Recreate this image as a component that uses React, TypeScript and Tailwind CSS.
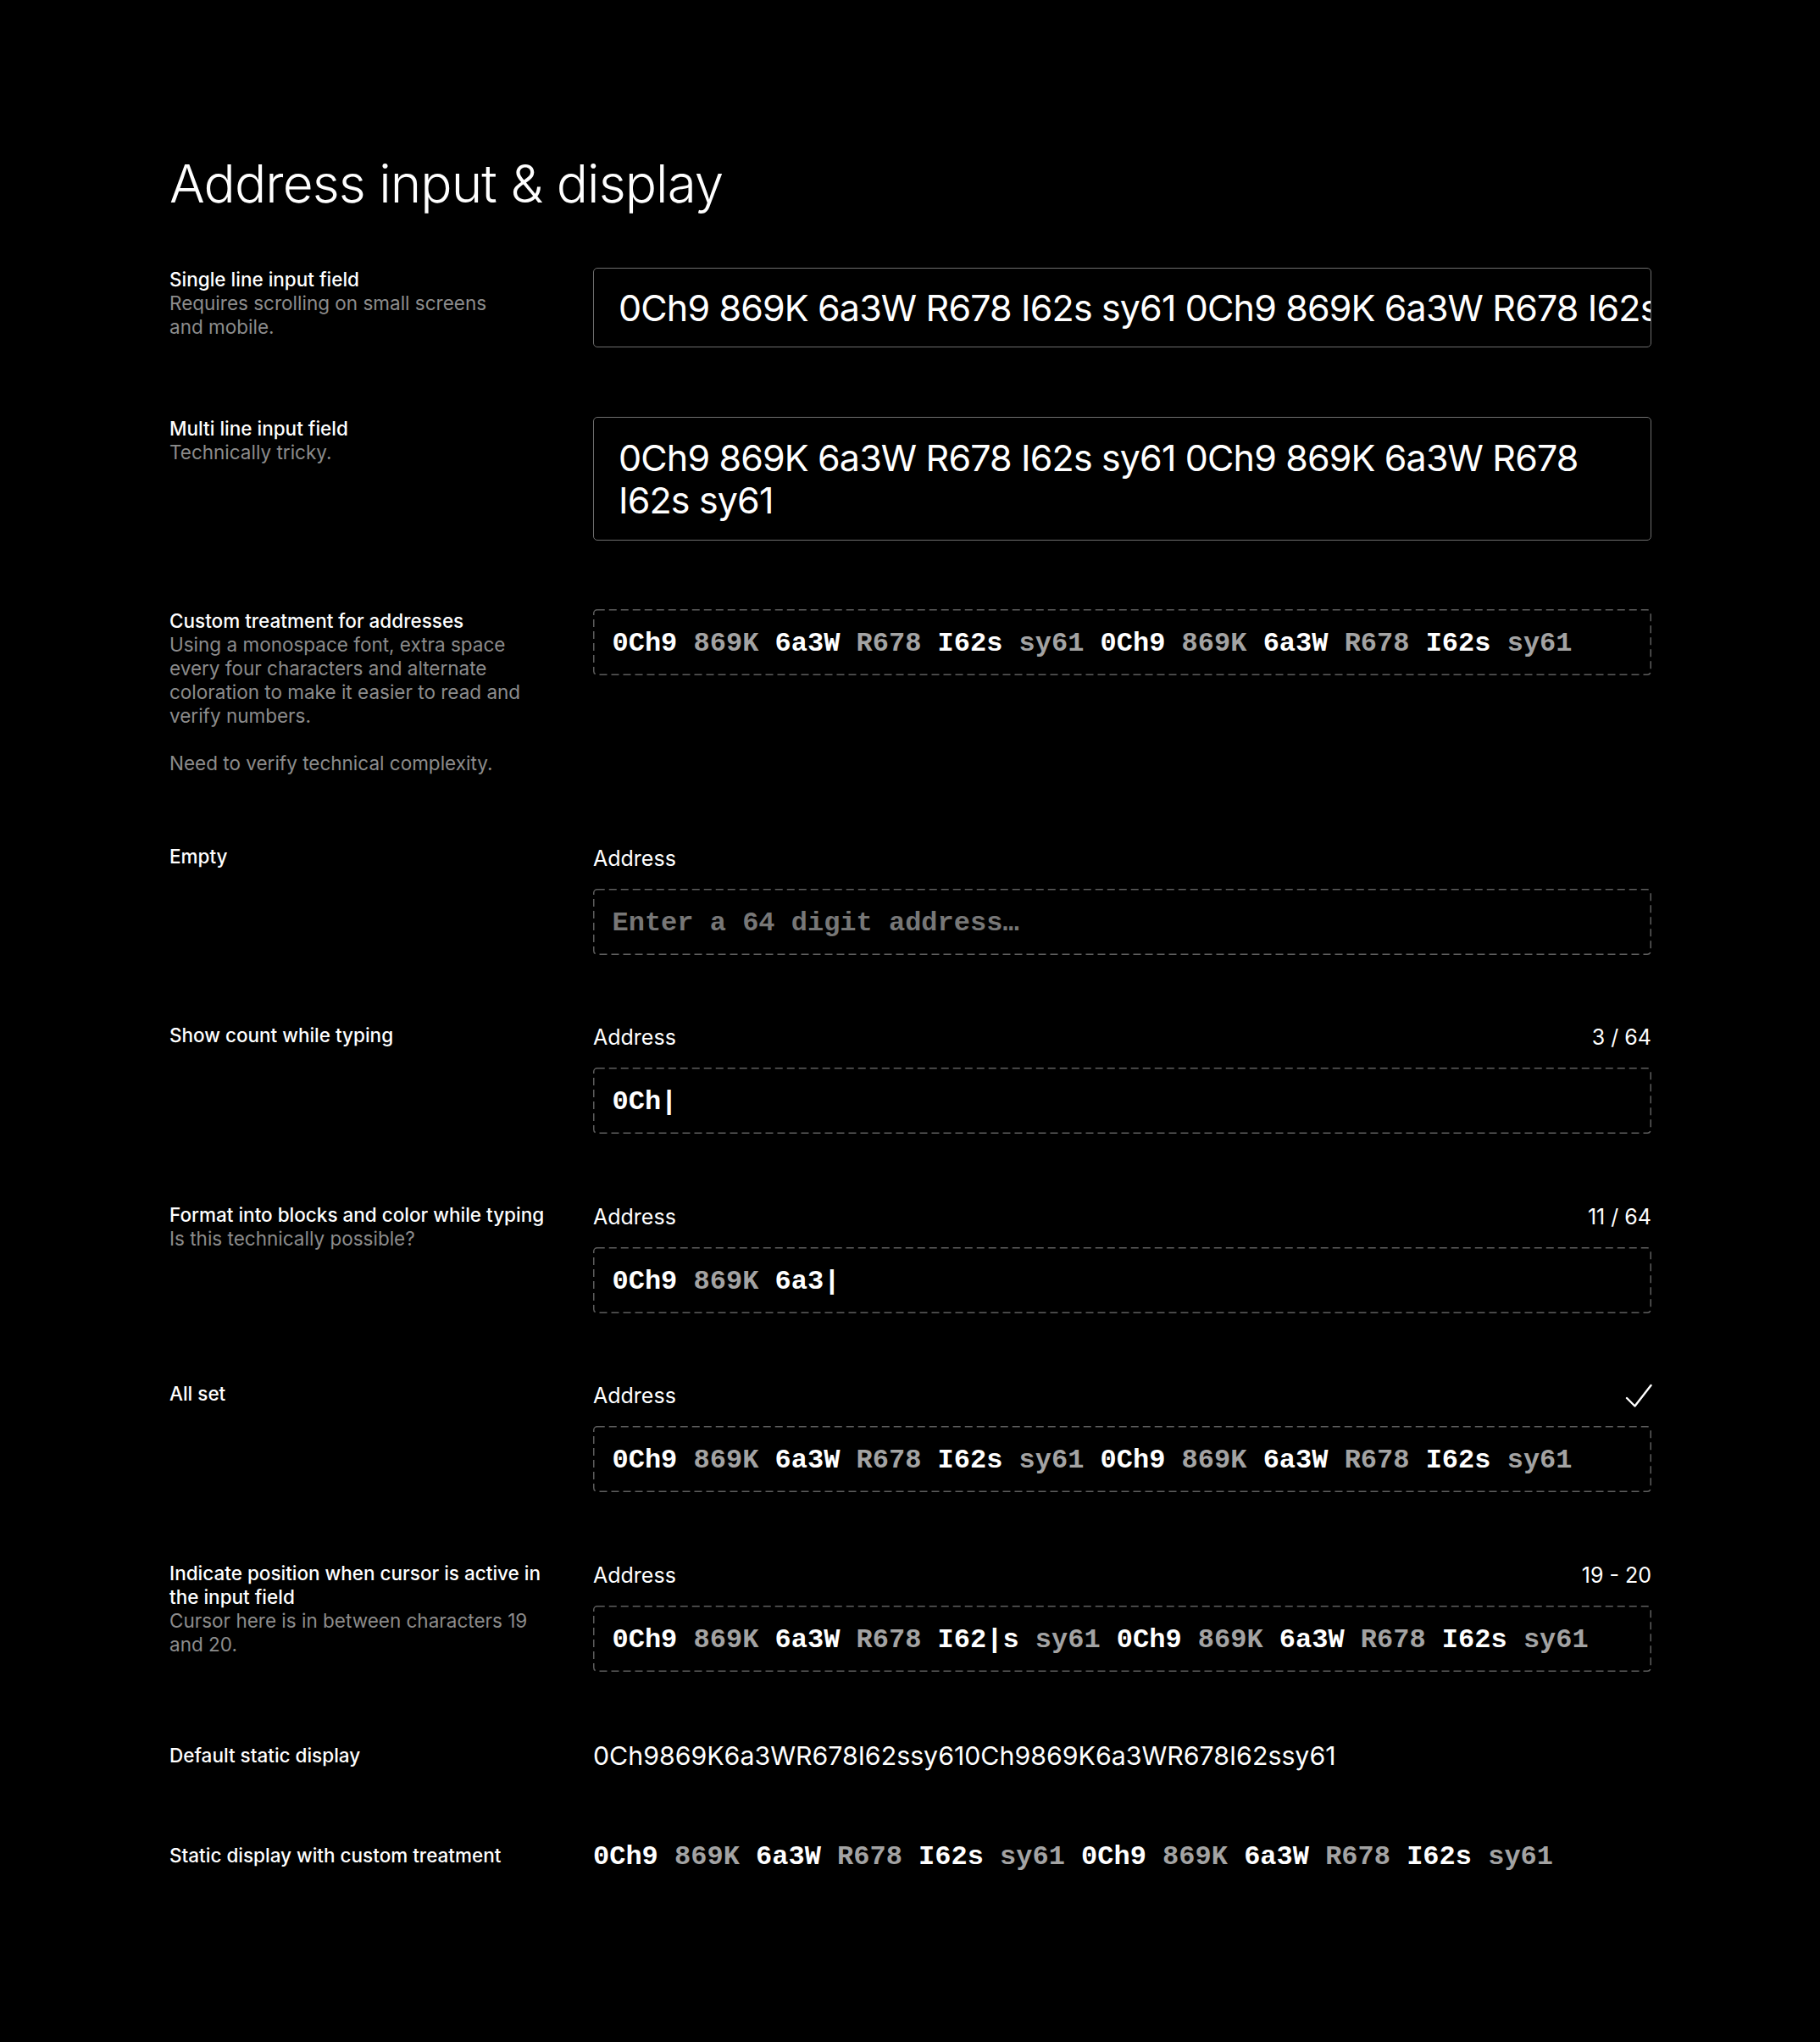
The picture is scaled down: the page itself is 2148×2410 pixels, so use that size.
import React from "react";

type Seg = { t: string; g?: boolean };

const FULL: Seg[] = [
  { t: "0Ch9" },
  { t: "869K", g: true },
  { t: "6a3W" },
  { t: "R678", g: true },
  { t: "I62s" },
  { t: "sy61", g: true },
  { t: "0Ch9" },
  { t: "869K", g: true },
  { t: "6a3W" },
  { t: "R678", g: true },
  { t: "I62s" },
  { t: "sy61", g: true },
];

function Mono({ segs }: { segs: Seg[] }) {
  return (
    <span className="whitespace-pre font-['Liberation_Mono',monospace] font-bold text-[32px] leading-[40px]">
      {segs.map((s, i) => (
        <React.Fragment key={i}>
          {i > 0 ? " " : ""}
          <span className={s.g ? "text-[#a3a3a3]" : "text-white"}>{s.t}</span>
        </React.Fragment>
      ))}
    </span>
  );
}

function DashedBox({ children }: { children?: React.ReactNode }) {
  return (
    <div className="relative flex h-[78px] items-center px-[22.5px] pt-[4px]">
      <svg className="pointer-events-none absolute inset-0 h-full w-full" fill="none">
        <rect
          x="0.75"
          y="0.75"
          rx="4"
          className="h-[calc(100%-1.5px)] w-[calc(100%-1.5px)]"
          stroke="#5e5e5e"
          strokeWidth="1.5"
          strokeDasharray="9 5"
        />
      </svg>
      {children}
    </div>
  );
}

function Field({ right, children }: { right?: React.ReactNode; children?: React.ReactNode }) {
  return (
    <div className="flex flex-col">
      <div className="flex h-[32px] items-center justify-between text-[25px] leading-[32px] text-white">
        <span>Address</span>
        {right}
      </div>
      <div className="mt-[20px]">{children}</div>
    </div>
  );
}

function Label({ title, sub }: { title: React.ReactNode; sub?: React.ReactNode }) {
  return (
    <div className="text-[22.5px] leading-[28px]">
      <div className="font-medium text-white">{title}</div>
      {sub ? <div className="text-[#8c8c8c]">{sub}</div> : null}
    </div>
  );
}

function Row({
  left,
  children,
  center,
}: {
  left: React.ReactNode;
  children?: React.ReactNode;
  center?: boolean;
}) {
  return (
    <div className={center ? "flex items-center" : "flex items-start"}>
      <div className="w-[500px] shrink-0">{left}</div>
      <div className="w-[1249px] shrink-0">{children}</div>
    </div>
  );
}

function CheckMark() {
  return (
    <svg width="32" height="29" viewBox="0 0 32 29" fill="none" className="mr-[-1px]">
      <polyline
        points="2,17 11.5,26.5 30.5,2"
        stroke="white"
        strokeWidth="2.4"
        strokeLinecap="round"
        strokeLinejoin="round"
      />
    </svg>
  );
}

export default function App() {
  const cursorSegs: Seg[] = [
    { t: "0Ch9" },
    { t: "869K", g: true },
    { t: "6a3W" },
    { t: "R678", g: true },
    { t: "I62|s" },
    { t: "sy61", g: true },
    { t: "0Ch9" },
    { t: "869K", g: true },
    { t: "6a3W" },
    { t: "R678", g: true },
    { t: "I62s" },
    { t: "sy61", g: true },
  ];

  return (
    <div className="min-h-[2410px] w-full bg-black text-white font-['Inter',sans-serif]">
      <div className="pl-[200px] pt-[186px] pb-[200px]">
        <h1 className="text-[62px] font-light leading-[62px] tracking-[-0.015em] text-white">
          Address input &amp; display
        </h1>

        <div className="mt-[68px] flex flex-col gap-[81.5px]">
          <Row
            left={
              <Label
                title="Single line input field"
                sub={
                  <>
                    Requires scrolling on small screens
                    <br />
                    and mobile.
                  </>
                }
              />
            }
          >
            <div className="flex h-[94px] items-center overflow-hidden rounded-[5px] border-[1.5px] border-[#6e6e6e] pl-[29px]">
              <span className="whitespace-nowrap text-[43px] leading-[50px] tracking-[-0.02em] text-white">
                0Ch9 869K 6a3W R678 I62s sy61 0Ch9 869K 6a3W R678 I62s sy61
              </span>
            </div>
          </Row>

          <Row left={<Label title="Multi line input field" sub="Technically tricky." />}>
            <div className="rounded-[5px] border-[1.5px] border-[#6e6e6e] px-[29px] py-[22px] text-[43px] leading-[50px] tracking-[-0.02em] text-white">
              0Ch9 869K 6a3W R678 I62s sy61 0Ch9 869K 6a3W R678
              <br />
              I62s sy61
            </div>
          </Row>

          <Row
            left={
              <Label
                title="Custom treatment for addresses"
                sub={
                  <>
                    Using a monospace font, extra space
                    <br />
                    every four characters and alternate
                    <br />
                    coloration to make it easier to read and
                    <br />
                    verify numbers.
                    <br />
                    <br />
                    Need to verify technical complexity.
                  </>
                }
              />
            }
          >
            <DashedBox>
              <Mono segs={FULL} />
            </DashedBox>
          </Row>

          <Row left={<Label title="Empty" />}>
            <Field>
              <DashedBox>
                <span className="whitespace-pre font-['Liberation_Mono',monospace] font-bold text-[32px] leading-[40px] text-[#777777]">
                  Enter a 64 digit address…
                </span>
              </DashedBox>
            </Field>
          </Row>

          <Row left={<Label title="Show count while typing" />}>
            <Field right={<span>3 / 64</span>}>
              <DashedBox>
                <Mono segs={[{ t: "0Ch|" }]} />
              </DashedBox>
            </Field>
          </Row>

          <Row
            left={
              <Label
                title="Format into blocks and color while typing"
                sub="Is this technically possible?"
              />
            }
          >
            <Field right={<span>11 / 64</span>}>
              <DashedBox>
                <Mono segs={[{ t: "0Ch9" }, { t: "869K", g: true }, { t: "6a3|" }]} />
              </DashedBox>
            </Field>
          </Row>

          <Row left={<Label title="All set" />}>
            <Field right={<CheckMark />}>
              <DashedBox>
                <Mono segs={FULL} />
              </DashedBox>
            </Field>
          </Row>

          <Row
            left={
              <Label
                title={
                  <>
                    Indicate position when cursor is active in
                    <br />
                    the input field
                  </>
                }
                sub={
                  <>
                    Cursor here is in between characters 19
                    <br />
                    and 20.
                  </>
                }
              />
            }
          >
            <Field right={<span>19 - 20</span>}>
              <DashedBox>
                <Mono segs={cursorSegs} />
              </DashedBox>
            </Field>
          </Row>

          <Row center left={<Label title="Default static display" />}>
            <div className="text-[30.3px] leading-[36px] text-white">
              0Ch9869K6a3WR678I62ssy610Ch9869K6a3WR678I62ssy61
            </div>
          </Row>

          <Row center left={<Label title="Static display with custom treatment" />}>
            <div className="flex h-[36px] items-center pt-[4px]">
              <Mono segs={FULL} />
            </div>
          </Row>
        </div>
      </div>
    </div>
  );
}
